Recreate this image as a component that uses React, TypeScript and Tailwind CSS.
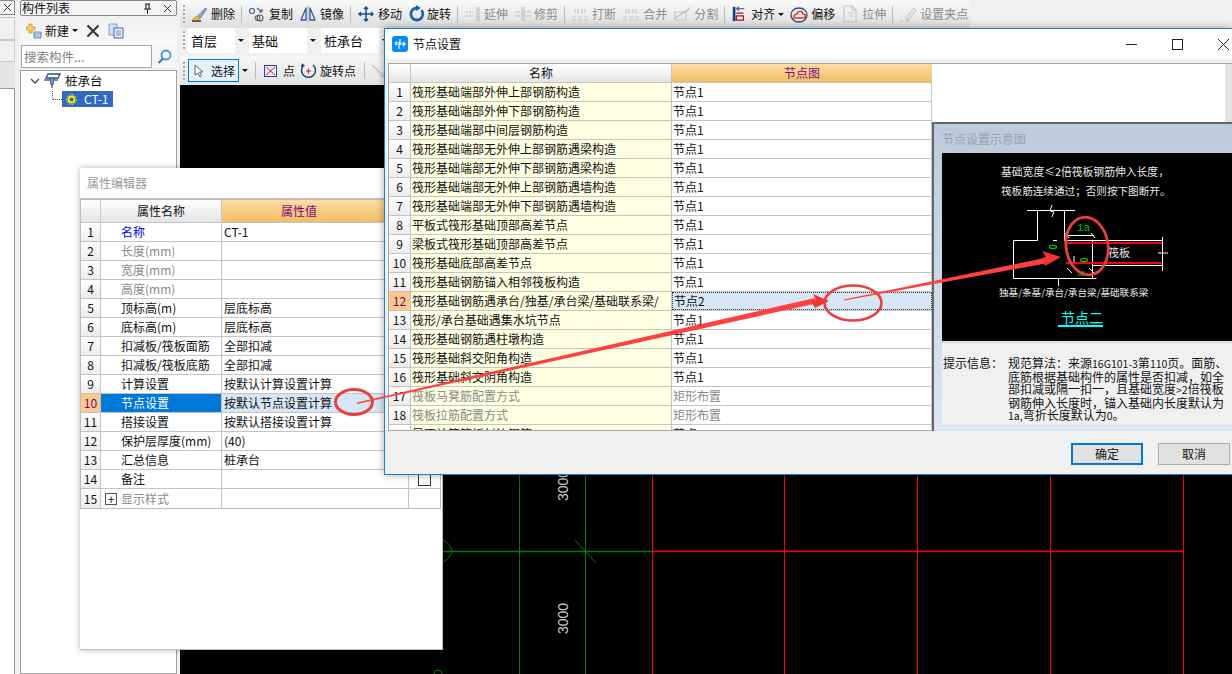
import React from "react";

const S = ({ w = 18, h = 18, children }: { w?: number; h?: number; children: React.ReactNode }) => (
  <svg width={w} height={h} viewBox="0 0 18 18" fill="none" className="shrink-0">{children}</svg>
);

const Brush = () => (
  <S>
    <path d="M2 16h9" stroke="#222" strokeWidth="1.4" />
    <path d="M7 12 15 3l2 1-7 10z" fill="#8fa6c8" stroke="#5a6f94" strokeWidth=".6" />
    <path d="M3 15c1-3 3-4 5-4l2 2c-1 2-4 3-7 2z" fill="#e8b84a" stroke="#a5742a" strokeWidth=".6" />
  </S>
);
const Copy = () => (
  <S>
    <circle cx="4" cy="6" r="2.5" stroke="#3e5f8a" strokeWidth="1.1" />
    <circle cx="12" cy="13" r="3" stroke="#555" strokeWidth="1.1" />
    <path d="M9 3l5 4M14 7V4M14 7h-3" stroke="#3e5f8a" strokeWidth="1.1" />
    <circle cx="9.5" cy="13" r="2.5" stroke="#555" strokeWidth="1" />
  </S>
);
const Mirror = () => (
  <S>
    <path d="M7 3 2 15h5zM11 3l5 12h-5z" stroke="#2f5c92" strokeWidth="1.3" strokeLinejoin="round" />
    <path d="M9 1v16" stroke="#8aa3c0" strokeWidth=".8" />
  </S>
);
const MoveI = () => (
  <S>
    <path d="M9 2v14M2 9h14M7 4l2-2 2 2M7 14l2 2 2-2M4 7 2 9l2 2M14 7l2 2-2 2" stroke="#1f4f86" strokeWidth="1.5" />
  </S>
);
const Rotate = () => (
  <S>
    <path d="M13.5 5.2A6 6 0 1 1 9 3" stroke="#1d5fb0" strokeWidth="2.8" />
    <path d="M8 0l5 3-5 3z" fill="#1d5fb0" />
  </S>
);
const Extend = () => (
  <S>
    <path d="M2 7h7M2 11h7" stroke="#b5b5b5" strokeWidth="1.2" strokeDasharray="2 1" />
    <path d="M13 2v14M15 2v14" stroke="#bbb" strokeWidth="1.1" />
  </S>
);
const Trim = () => (
  <S>
    <path d="M1 7h5M1 11h5M11 7h6M11 11h6" stroke="#bbb" strokeWidth="1.1" />
    <path d="M8 2v14M10 2v14" stroke="#bbb" strokeWidth="1.1" />
  </S>
);
const Break = () => (
  <S>
    <path d="M1 12h16M1 15h16" stroke="#c4c4c4" strokeWidth="1.2" strokeDasharray="4 2" />
    <path d="M4 4v4M7 4v4M11 4v4M14 4v4" stroke="#c4c4c4" strokeWidth="1.2" />
  </S>
);
const Split = () => (
  <S>
    <path d="M2 7h11v8H2z" stroke="#c0c0c0" strokeWidth="1.1" />
    <path d="M1 14 16 4" stroke="#c0c0c0" strokeWidth="1.1" />
    <path d="m12 7 4-5 1 1-4 5z" fill="#c8c8c8" />
  </S>
);
const Align = () => (
  <S w={16}>
    <path d="M2 1h3v16H2z" fill="#123e7c" />
    <path d="M6 3h9M6 3l3-2M6 3l3 2" stroke="#1d4f9a" strokeWidth="1.2" />
    <path d="M6 8h8M6 16h8V11H6z" stroke="#9c1c1c" strokeWidth="1.4" />
  </S>
);
const Offset = () => (
  <S>
    <ellipse cx="9" cy="10" rx="8" ry="7" stroke="#2b4f78" strokeWidth="1.3" />
    <path d="M4 13c-1-3 2-4 3-4 0-3 5-4 6 0 3 0 3 4 0 4z" stroke="#d83b2b" strokeWidth="1.5" />
  </S>
);
const Stretch = () => (
  <S>
    <path d="M3 1h8l4 4v12H3z" stroke="#c4c4c4" strokeWidth="1.1" />
    <path d="M11 1v4h4M7 8h5M9 11h3" stroke="#c4c4c4" strokeWidth="1" />
  </S>
);
const Grip = () => (
  <S>
    <path d="M1 16h3M7 16h3" stroke="#bbb" strokeWidth="1.2" />
    <path d="m8 12 7-9 2 2-7 9-3 1z" stroke="#c4c4c4" strokeWidth="1.1" />
  </S>
);

const Caret = ({ className = "" }: { className?: string }) => (
  <span className={`w-0 h-0 border-x-[3px] border-x-transparent border-t-[3px] border-t-[#111] ${className}`} />
);
const GripDots = ({ className = "" }: { className?: string }) => (
  <span className={`w-0 h-[18px] border-l-2 border-dotted border-[#a8a8a8] shrink-0 ${className}`} />
);
const Sep = () => <span className="block w-px h-[17px] bg-[#b8b8b8] shrink-0" />;
const L = ({ children }: { children: React.ReactNode }) => <span className="text-[10.5px]">{children}</span>;

function Tool({ icon, text, lead = 21, off, caret }: { icon: React.ReactNode; text: string; lead?: number; off?: boolean; caret?: boolean }) {
  return (
    <div className={`flex items-center shrink-0 whitespace-nowrap ${off ? "text-[#8b8b8b]" : "text-[#111]"}`}>
      <span className="flex items-center" style={{ width: lead }}>{icon}</span>
      <span>{text}</span>
      {caret && <Caret className="ml-[3px]" />}
    </div>
  );
}

function Combo({ text, w }: { text: string; w: number }) {
  return (
    <div className="h-[25px] bg-white flex items-center justify-between pl-[3px] shrink-0 text-[13px]" style={{ width: w }}>
      <span>{text}</span>
      <span className="w-[12px] h-full bg-[#f0f0f0] flex items-center justify-center"><Caret /></span>
    </div>
  );
}

const propRows: { n: number; name: string; val?: string; kind?: string }[] = [
  { n: 1, name: "名称", val: "CT-1", kind: "blue" },
  { n: 2, name: "长度(mm)", kind: "gray" },
  { n: 3, name: "宽度(mm)", kind: "gray" },
  { n: 4, name: "高度(mm)", kind: "gray" },
  { n: 5, name: "顶标高(m)", val: "层底标高" },
  { n: 6, name: "底标高(m)", val: "层底标高" },
  { n: 7, name: "扣减板/筏板面筋", val: "全部扣减" },
  { n: 8, name: "扣减板/筏板底筋", val: "全部扣减" },
  { n: 9, name: "计算设置", val: "按默认计算设置计算" },
  { n: 10, name: "节点设置", val: "按默认节点设置计算", kind: "sel" },
  { n: 11, name: "搭接设置", val: "按默认搭接设置计算" },
  { n: 12, name: "保护层厚度(mm)", val: "(40)" },
  { n: 13, name: "汇总信息", val: "桩承台" },
  { n: 14, name: "备注", kind: "check" },
  { n: 15, name: "显示样式", kind: "plus" },
];

const nodeRows: [number, string, string, boolean?][] = [
  [1, "筏形基础端部外伸上部钢筋构造", "节点1"],
  [2, "筏形基础端部外伸下部钢筋构造", "节点1"],
  [3, "筏形基础端部中间层钢筋构造", "节点1"],
  [4, "筏形基础端部无外伸上部钢筋遇梁构造", "节点1"],
  [5, "筏形基础端部无外伸下部钢筋遇梁构造", "节点1"],
  [6, "筏形基础端部无外伸上部钢筋遇墙构造", "节点1"],
  [7, "筏形基础端部无外伸下部钢筋遇墙构造", "节点1"],
  [8, "平板式筏形基础顶部高差节点", "节点1"],
  [9, "梁板式筏形基础顶部高差节点", "节点1"],
  [10, "筏形基础底部高差节点", "节点1"],
  [11, "筏形基础钢筋锚入相邻筏板构造", "节点1"],
  [12, "筏形基础钢筋遇承台/独基/承台梁/基础联系梁/", "节点2"],
  [13, "筏形/承台基础遇集水坑节点", "节点1"],
  [14, "筏形基础钢筋遇柱墩构造", "节点1"],
  [15, "筏形基础斜交阳角构造", "节点1"],
  [16, "筏形基础斜交阴角构造", "节点1"],
  [17, "筏板马凳筋配置方式", "矩形布置", true],
  [18, "筏板拉筋配置方式", "矩形布置", true],
  [19, "是否计算筏板封边钢筋", "节点1"],
];

const NumCell = ({ n, active, w }: { n: number; active?: boolean; w: string }) => (
  <div className={`${w} shrink-0 h-full flex items-center justify-center border-r border-[#c4c4c4] ${active ? "bg-[#fdc98a] text-[#6b0a78]" : "bg-gradient-to-b from-white to-[#ececec] text-[#111]"}`}>{n}</div>
);

function PropertyEditor() {
  return (
    <div className="absolute left-[80px] top-[168px] w-[363px] h-[482px] bg-white border-b border-r border-[#bdbdbd] shadow-[0_0_6px_rgba(0,0,0,0.3)] flex flex-col">
      <div className="h-[30px] shrink-0 pl-[7px] flex items-center text-[#9a9a9a]">属性编辑器</div>
      <div className="w-[361px] border border-[#bdbdbd] border-t-2 flex flex-col">
        <div className="flex h-[23px] border-b border-[#c4c4c4]">
          <div className="w-[20px] shrink-0 border-r border-[#c4c4c4] bg-gradient-to-b from-white to-[#e4e4e4]" />
          <div className="w-[121px] shrink-0 border-r border-[#c4c4c4] bg-gradient-to-b from-white to-[#e4e4e4] flex items-center justify-center">属性名称</div>
          <div className="flex-1 bg-gradient-to-b from-[#fbdda3] to-[#f2bd62] text-[#7a0a80] flex items-center justify-center pr-[64px]">属性值</div>
        </div>
        {propRows.map((r) => {
          const sel = r.kind === "sel";
          return (
            <div key={r.n} className="flex h-[19px] border-b border-[#c4c4c4] last:border-b-0">
              <NumCell n={r.n} active={sel} w="w-[20px]" />
              <div className={`w-[121px] shrink-0 h-full border-r border-[#c4c4c4] flex items-center whitespace-nowrap ${r.kind === "plus" ? "pl-[4px]" : "pl-[20px]"} ${sel ? "bg-[#0078d7] text-white" : r.kind === "blue" ? "text-[#0000ff]" : r.kind === "gray" || r.kind === "plus" ? "text-[#8a8a8a]" : "text-[#111]"}`}>
                {r.kind === "plus" && (
                  <span className="w-[12px] h-[12px] border border-[#555] mr-[4px] flex items-center justify-center text-[#111] text-[12px] leading-none">+</span>
                )}
                {r.name}
              </div>
              <div className={`w-[187px] shrink-0 h-full border-r border-[#c4c4c4] pl-[2px] flex items-center whitespace-nowrap ${sel ? "bg-[#d6e6f5]" : ""}`}>{r.val}</div>
              <div className={`flex-1 h-full flex items-center justify-center ${sel ? "bg-[#d6e6f5]" : ""}`}>
                {r.kind === "check" && <span className="w-[13px] h-[13px] border border-[#333] bg-white" />}
              </div>
            </div>
          );
        })}
      </div>
    </div>
  );
}

function Diagram() {
  return (
    <svg viewBox="0 0 290 188" className="w-full h-full" fill="none">
      <g transform="translate(-943 -153)">
        <g stroke="#fff" strokeWidth="1">
          <path d="M1028 210.5h48M1038.5 210.5v30M1065.5 210.5v30M1014.500 240.500h24M1014.500 240.500v38h83M1054 240.500h4M1065 240.500h98M1093.500 240.500v38M1093 265.500h70M1163.500 237v34M1159 253h10M1059.500 278v8M1068 235.500h27M1075 256v8M1068 268l5 5M1090 268l5 5M1066 233l4 5M1092 233l4 5" />
          <path d="M1053 205l-2 6 4 1-2 5" />
        </g>
        <path d="M1067 243h96M1067 263h96" stroke="#ff0000" strokeWidth="2" />
        <text x="1078" y="231" fill="#00c000" fontSize="11" fontFamily="'Liberation Mono',monospace">1a</text>
        <ellipse cx="1054" cy="247" rx="3.5" ry="1.6" stroke="#00c000" strokeWidth="1.2" />
        <ellipse cx="1085" cy="260" rx="3.5" ry="1.6" stroke="#00c000" strokeWidth="1.2" />
        <path d="M1078 272h8M1078 275h8" stroke="#00c000" strokeWidth="1.2" />
        <text x="1109" y="257" fill="#e8e8e8" fontSize="11" fontFamily="'Noto Sans CJK SC',sans-serif">筏板</text>
        <g fill="#e8e8e8" fontFamily="'Noto Sans CJK SC',sans-serif">
          <text x="1002" y="176" fontSize="10.8">基础宽度≤2倍筏板钢筋伸入长度，</text>
          <text x="1002" y="195" fontSize="10.6">筏板筋连续通过；否则按下图断开。</text>
          <text x="1000" y="296" fontSize="9.6">独基/条基/承台/承台梁/基础联系梁</text>
        </g>
        <text x="1062" y="323" fill="#00ffff" fontSize="14" fontFamily="'Noto Sans CJK SC',sans-serif">节点二</text>
        <path d="M1059 326h45" stroke="#00ffff" strokeWidth="2" />
      </g>
    </svg>
  );
}

function NodeDialog() {
  return (
    <div className="absolute left-[384px] top-[28px] w-[848px] h-[447px] bg-[#f0f0f0] border-t border-l border-b border-[#1a7fd0] flex flex-col shadow-[0_0_8px_rgba(0,0,0,0.35)]">
      <div className="h-[30px] shrink-0 bg-white flex items-center pl-[7px] text-[#111]">
        <span className="w-[16px] h-[16px] rounded-[3px] bg-[#0a8cf0] flex items-center justify-center mr-[5px]">
          <svg width="12" height="12" viewBox="0 0 12 12" fill="none"><path d="M6 1v4H1M5 6v5M5 6h6M9 4l2 2-2 2M3 4 1 5M3 7 1 6" stroke="#fff" strokeWidth="1.2" /></svg>
        </span>
        <span className="flex-1">节点设置</span>
        <span className="w-[46px] flex justify-center"><span className="w-[11px] h-px bg-[#222]" /></span>
        <span className="w-[46px] flex justify-center"><span className="w-[11px] h-[11px] border border-[#222]" /></span>
        <span className="w-[32px] pl-[18px] overflow-hidden">
          <svg width="11" height="11" viewBox="0 0 11 11" className="block"><path d="M0 0l11 11M11 0 0 11" stroke="#222" /></svg>
        </span>
      </div>
      <div className="h-[4px] shrink-0" />
      <div className="flex pl-[3px] h-[368px] shrink-0">
        <div className="w-[544px] shrink-0 border-l border-t border-b border-[#a8a8a8] overflow-hidden bg-white">
          <div className="flex h-[19px] border-b border-[#c4c4c4]">
            <div className="w-[22px] shrink-0 border-r border-[#c4c4c4] bg-gradient-to-b from-white to-[#e4e4e4]" />
            <div className="w-[261px] shrink-0 border-r border-[#c4c4c4] bg-gradient-to-b from-white to-[#e4e4e4] flex items-center justify-center">名称</div>
            <div className="w-[260px] shrink-0 bg-gradient-to-b from-[#fbdda3] to-[#f2bd62] text-[#7a0a80] flex items-center justify-center">节点图</div>
          </div>
          {nodeRows.map(([n, name, val, dim]) => {
            const sel = n === 12;
            return (
              <div key={n} className="flex h-[19px] border-b border-[#c4c4c4]">
                <NumCell n={n} active={sel} w="w-[22px]" />
                <div className={`w-[261px] shrink-0 h-full bg-[#ffffe2] border-r border-[#c4c4c4] pl-[1px] flex items-center whitespace-nowrap overflow-hidden ${dim ? "text-[#8a8a8a]" : "text-[#111]"}`}>{name}</div>
                <div className={`w-[260px] shrink-0 h-full pl-[1px] flex items-center ${sel ? "bg-[#d6e6f5] border border-dotted border-[#333]" : "border-r border-[#c4c4c4]"} ${dim ? "text-[#8a8a8a]" : "text-[#111]"}`}>{val}</div>
              </div>
            );
          })}
        </div>
        <div className="flex-1 min-w-0 flex flex-col border-t border-[#a8a8a8]">
          <div className="h-[58px] shrink-0 bg-white flex justify-end">
            <span className="w-[7px] h-full bg-[#e4e4e4]" />
          </div>
          <div className="flex-1 min-h-0 border-l-2 border-t-2 border-[#666] bg-gradient-to-b from-[#bccbdb] to-[#dbe6f2] flex flex-col pl-[8px] pb-[7px]">
            <div className="h-[29px] shrink-0 flex items-center text-[#9aa3ab]">节点设置示意图</div>
            <div className="h-[188px] shrink-0 bg-black"><Diagram /></div>
            <div className="flex-1 mt-[2px] bg-[#f0f0f0] flex pt-[14px] pl-[1px] leading-[12.5px] text-[#111] whitespace-nowrap">
              <div className="w-[65px] shrink-0">提示信息：</div>
              <div>
                <div>规范算法：来源<L>16G101-3</L>第<L>110</L>页。面筋、</div>
                <div>底筋根据基础构件的属性是否扣减，如全</div>
                <div>部扣减或隔一扣一，且基础宽度<L>&gt;2</L>倍筏板</div>
                <div>钢筋伸入长度时，锚入基础内长度默认为</div>
                <div><L>1a,</L>弯折长度默认为<L>0</L>。</div>
              </div>
            </div>
          </div>
        </div>
      </div>
      <div className="flex-1 flex justify-end items-start pt-[12px] pr-[2px] gap-[15px]">
        <button className="w-[72px] h-[22px] bg-[#e1e1e1] border-2 border-[#0078d7] flex items-center justify-center text-[#111]">确定</button>
        <button className="w-[72px] h-[22px] bg-[#e1e1e1] border border-[#adadad] flex items-center justify-center text-[#111]">取消</button>
      </div>
    </div>
  );
}

function Canvas() {
  return (
    <svg className="block w-full h-full" viewBox="180 85 1052 589" fill="none">
      <g stroke="#008000" strokeWidth="1">
        <path d="M519.500 85v589M585.500 85v589" />
        <path d="M440 551.500h212" strokeWidth="1.500" />
        <path d="M575 540l21 23" />
        <path d="M442 540c6 2 9 6 10 11-1 5-4 9-10 11" />
        <circle cx="438" cy="674" r="4" />
      </g>
      <g stroke="#ff0000" strokeWidth="1">
        <path d="M652.500 85v589M784.500 85v589M917.500 85v589M1050.500 85v589M1183.500 85v589" />
        <path d="M652 551.500h532" strokeWidth="1.500" />
      </g>
      <g fill="#cfcfcf" fontSize="14" fontFamily="'Liberation Sans',sans-serif">
        <text transform="translate(568 634) rotate(-90)">3000</text>
        <text transform="translate(568 501) rotate(-90)">3000</text>
      </g>
    </svg>
  );
}

function Annotations() {
  return (
    <svg className="absolute left-0 top-0 pointer-events-none" width="1232" height="674" viewBox="0 0 1232 674" fill="none">
      <ellipse cx="354" cy="402" rx="18.500" ry="12.500" stroke="#e8403c" strokeWidth="3" />
      <ellipse cx="853" cy="303" rx="28.500" ry="17.500" stroke="#e8403c" strokeWidth="2.600" />
      <ellipse cx="1087" cy="246" rx="21" ry="29" stroke="#e8403c" strokeWidth="2.800" transform="rotate(-8 1087 246)" />
      <path d="M357 402.500 815 298l1 5.500L357 404z" fill="#ff4040" />
      <path d="M829 301l-16-7 3 6-5 1 4 7z" fill="#f03535" />
      <path d="M844 299.500 1047 257.500l1 5.500L844 300.500z" fill="#ff4040" />
      <path d="M1061 257l-19-6 4 6-4 1 3 8z" fill="#f03535" />
    </svg>
  );
}

export default function App() {
  return (
    <div className="relative w-[1232px] h-[674px] overflow-hidden bg-[#f0f0f0] text-[12px] leading-[16px] text-[#111] font-['Noto_Sans_CJK_SC',sans-serif] flex">
      {/* far left sliver */}
      <div className="w-[15px] shrink-0 flex flex-col">
        <div className="h-[15px] border border-[#888] border-l-0 rounded-tr-[2px] bg-[#f5f5f5] flex items-center justify-center">
          <svg width="9" height="9" viewBox="0 0 9 9"><path d="M1 1l7 7M8 1 1 8" stroke="#333" /></svg>
        </div>
        <div className="h-[23px] mt-[2px] border border-[#c8c8c8] border-l-0 bg-[#f0f0f0]" />
        <div className="h-[22px] border border-[#c8c8c8] border-l-0 bg-[#f0f0f0]" />
        <div className="h-[26px] bg-[#e4e4e4]" />
        <div className="flex-1 bg-white border-t border-r border-[#999]" />
      </div>
      {/* component list */}
      <div className="ml-[5px] w-[157px] shrink-0 flex flex-col">
        <div className="h-[16px] border border-[#888] rounded-[2px] bg-[#f3f3f3] flex items-center justify-between pl-px pr-[4px] text-[12px]">
          <span>构件列表</span>
          <span className="flex items-center gap-[11px]">
            <svg width="9" height="11" viewBox="0 0 9 11" fill="none"><path d="M2 1h5M3 1v5M6 1v5M1 6h7M4.500 6v5" stroke="#222" strokeWidth="1.1" /></svg>
            <svg width="9" height="9" viewBox="0 0 9 9"><path d="M1 1l7 7M8 1 1 8" stroke="#333" /></svg>
          </span>
        </div>
        <div className="h-[29px] flex items-center pl-[6px] bg-gradient-to-b from-[#f0f0f0] to-[#f9f9f9]">
          <svg width="16" height="16" viewBox="0 0 16 16" fill="none" className="shrink-0">
            <path d="M3 1h3v3h3v3H6v3H3V7H0V4h3z" fill="#f4d35e" stroke="#b8942a" strokeWidth=".7" />
            <path d="M8 9h7v6H8z" fill="#dbe6f5" stroke="#4a6fa5" strokeWidth=".8" />
            <path d="M8 11h7M8 13h7" stroke="#4a6fa5" strokeWidth=".6" />
          </svg>
          <span className="ml-[3px]">新建</span>
          <Caret className="ml-[3px]" />
          <svg width="14" height="14" viewBox="0 0 14 14" className="ml-[8px]"><path d="M1.500 1.500l11 11M12.500 1.500l-11 11" stroke="#333" strokeWidth="2" /></svg>
          <svg width="16" height="16" viewBox="0 0 16 16" fill="none" className="ml-[8px]">
            <path d="M1 1h8v11H1z" fill="#cfe0f5" stroke="#6a8fc0" strokeWidth=".8" />
            <path d="M6 5h9v10H6z" fill="#eaf2fb" stroke="#36588f" strokeWidth=".9" />
            <path d="M8 8h5M8 10h5M8 12h5" stroke="#36588f" strokeWidth=".7" />
          </svg>
        </div>
        <div className="h-[23px] flex">
          <div className="w-[131px] ml-px border border-[#a8a8a8] bg-white flex items-center pl-[2px] text-[#808080] text-[12.5px]">搜索构件...</div>
          <div className="flex-1 flex items-center justify-center bg-[#f5f5f5]">
            <svg width="15" height="15" viewBox="0 0 15 15" fill="none"><circle cx="9" cy="6" r="4.500" stroke="#3f93d8" strokeWidth="1.800" /><path d="M6 9.500 1.500 14" stroke="#2f7dbc" strokeWidth="2.200" /></svg>
          </div>
        </div>
        <div className="h-[2px]" />
        <div className="flex-1 bg-white border border-[#a0a0a0] pl-[8px] pt-[2px]">
          <div className="flex items-center h-[16px]">
            <svg width="10" height="7" viewBox="0 0 10 7" fill="none" className="ml-[1px]"><path d="M1 1l4 4 4-4" stroke="#444" strokeWidth="1.300" /></svg>
            <svg width="18" height="18" viewBox="0 0 18 18" fill="none" className="ml-[3px]">
              <path d="M5 2h12l-2 4H3z" stroke="#2c4f80" strokeWidth="1.300" />
              <path d="M1 8h14" stroke="#2c4f80" strokeWidth="1.300" />
              <path d="M7 6h4l-1 7H8z" fill="#7c9ac0" stroke="#2c4f80" strokeWidth=".8" />
              <path d="M9 13v3" stroke="#2c4f80" strokeWidth="1.200" />
            </svg>
            <span className="ml-[4px] text-[#111] text-[12.5px]">桩承台</span>
          </div>
          <div className="flex items-center h-[16px] mt-[2px]">
            <span className="w-[10px] h-[9px] ml-[23px] border-l border-b border-dotted border-[#555] self-start" />
            <span className="w-[51px] h-[16px] bg-[#316ac5] text-white flex items-center pl-[4px]">
              <svg width="11" height="11" viewBox="0 0 11 11" fill="none"><circle cx="5.500" cy="5.500" r="3" stroke="#ffe600" strokeWidth="2" /><circle cx="5.500" cy="5.500" r="5" stroke="#ffe600" strokeWidth="1" strokeDasharray="1.500 1.500" /></svg>
              <span className="ml-[7px]">CT-1</span>
            </span>
          </div>
        </div>
      </div>
      {/* main */}
      <div className="ml-[3px] flex-1 min-w-0 flex flex-col">
        <div className="h-[28px] w-[790px] shrink-0 bg-gradient-to-b from-[#fafafa] to-[#dedede] flex items-center gap-[6px] pl-[3px]">
          <GripDots className="mr-[-1px]" />
          <Tool icon={<Brush />} text="删除" />
          <Sep />
          <Tool icon={<Copy />} text="复制" />
          <Tool icon={<Mirror />} text="镜像" />
          <Sep />
          <Tool icon={<MoveI />} text="移动" />
          <Tool icon={<Rotate />} text="旋转" lead={19} />
          <Sep />
          <Tool icon={<Extend />} text="延伸" lead={20} off />
          <Tool icon={<Trim />} text="修剪" lead={20} off />
          <Sep />
          <Tool icon={<Break />} text="打断" off />
          <Tool icon={<Break />} text="合并" off />
          <Tool icon={<Split />} text="分割" off />
          <Sep />
          <Tool icon={<Align />} text="对齐" lead={20} caret />
          <Tool icon={<Offset />} text="偏移" />
          <Tool icon={<Stretch />} text="拉伸" off />
          <Sep />
          <Tool icon={<Grip />} text="设置夹点" off />
        </div>
        <div className="h-[28px] shrink-0 flex items-start pl-[3px] bg-[#f0f0f0]">
          <GripDots className="mt-[3px] mr-[3px]" />
          <div className="flex gap-[2px]">
            <Combo text="首层" w={59} />
            <Combo text="基础" w={70} />
            <Combo text="桩承台" w={70} />
          </div>
        </div>
        <div className="h-[29px] shrink-0 flex items-center pl-[3px] bg-gradient-to-b from-[#f6f6f6] to-[#e4e4e4]">
          <GripDots className="mr-[3px]" />
          <div className="w-[51px] h-[23px] border border-[#0078d7] bg-[#e5f1fb] flex items-center pl-[5px] gap-[7px]">
            <svg width="10" height="14" viewBox="0 0 10 14" fill="none"><path d="M1 1v10l3-2 2 4 1.500-1-2-4h3.500z" stroke="#555" fill="#fff" strokeWidth=".9" /></svg>
            <span>选择</span>
          </div>
          <Caret className="ml-[3px] mr-[7px]" />
          <Sep />
          <div className="ml-[8px] w-[13px] h-[12px] border border-[#27408b] flex items-center justify-center bg-[#eef]">
            <svg width="9" height="8" viewBox="0 0 9 8"><path d="M0 0l9 8M9 0 0 8" stroke="#c02020" /></svg>
          </div>
          <span className="ml-[6px]">点</span>
          <svg width="17" height="17" viewBox="0 0 17 17" fill="none" className="ml-[5px]">
            <path d="M4 3a7 7 0 1 0 9 0" stroke="#1f3f70" strokeWidth="1.500" />
            <path d="M2 1l3 3-4 1z" fill="#1f3f70" />
            <path d="M8.500 6.500v5M6 9h5" stroke="#c02020" strokeWidth="1.100" />
          </svg>
          <span className="ml-[3px]">旋转点</span>
          <span className="ml-[8px]"><Sep /></span>
          <svg width="16" height="16" viewBox="0 0 16 16" fill="none" className="ml-[6px]"><path d="M1 2 14 14M14 14l-5-1M14 14l-1-5" stroke="#c0c0c0" strokeWidth="1.200" /></svg>
        </div>
        <div className="flex-1 min-h-0 bg-black"><Canvas /></div>
      </div>
      <PropertyEditor />
      <NodeDialog />
      <Annotations />
    </div>
  );
}
